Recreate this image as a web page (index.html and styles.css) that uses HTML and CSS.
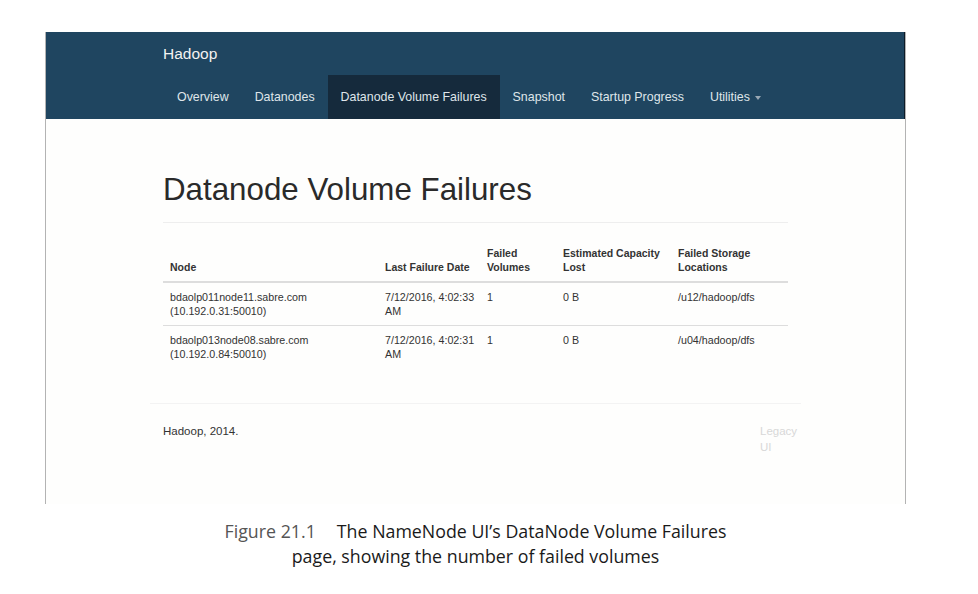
FILE: index.html
```html
<!DOCTYPE html>
<html>
<head>
<meta charset="utf-8">
<link rel="stylesheet" href="styles.css">
</head>
<body>
<div class="figure">
  <div class="frame">
    <div class="navbar">
      <div class="nav-inner">
        <div class="brand">Hadoop</div>
        <ul class="nav">
          <li>Overview</li>
          <li>Datanodes</li>
          <li class="active">Datanode Volume Failures</li>
          <li>Snapshot</li>
          <li>Startup Progress</li>
          <li>Utilities <span class="caret"></span></li>
        </ul>
      </div>
    </div>
    <div class="content">
      <h1 class="title">Datanode Volume Failures</h1>
      <table class="tbl">
        <colgroup>
          <col class="c1"><col class="c2"><col class="c3"><col class="c4"><col class="c5">
        </colgroup>
        <thead>
          <tr>
            <th>Node</th>
            <th>Last Failure Date</th>
            <th>Failed<br>Volumes</th>
            <th>Estimated Capacity<br>Lost</th>
            <th>Failed Storage<br>Locations</th>
          </tr>
        </thead>
        <tbody>
          <tr>
            <td>bdaolp011node11.sabre.com<br>(10.192.0.31:50010)</td>
            <td>7/12/2016, 4:02:33<br>AM</td>
            <td>1</td>
            <td>0 B</td>
            <td>/u12/hadoop/dfs</td>
          </tr>
          <tr>
            <td>bdaolp013node08.sabre.com<br>(10.192.0.84:50010)</td>
            <td>7/12/2016, 4:02:31<br>AM</td>
            <td>1</td>
            <td>0 B</td>
            <td>/u04/hadoop/dfs</td>
          </tr>
        </tbody>
      </table>
      <div class="footer">
        <div class="copy">Hadoop, 2014.</div>
        <div class="legacy">Legacy<br>UI</div>
      </div>
    </div>
  </div>
  <p class="caption"><span class="fig">Figure 21.1</span><span class="sp"></span>The NameNode UI’s DataNode Volume Failures<br>page, showing the number of failed volumes</p>
</div>
</body>
</html>
```
FILE: styles.css
```css
html, body {
  margin: 0;
  padding: 0;
  background: #ffffff;
}
body {
  font-family: "Liberation Sans", Arial, sans-serif;
}
.figure {
  padding-top: 32px;
  padding-left: 45px;
  width: 861px;
}
.frame {
  border-left: 1px solid #b3b3b3;
  border-right: 1px solid #b3b3b3;
  height: 472px;
  background: #fefefd;
}
.navbar {
  background: #1f4560;
  height: 87px;
  border-right: 1px solid #0c1b28;
}
.nav-inner {
  padding-left: 117px;
}
.brand {
  color: #f2f2f2;
  font-size: 15.5px;
  height: 43px;
  line-height: 43px;
}
.nav {
  list-style: none;
  margin: 0;
  padding: 0;
  display: flex;
  margin-left: 1px;
}
.nav li {
  color: #dfe5ea;
  font-size: 12.4px;
  padding: 0 13px;
  height: 44px;
  line-height: 44px;
}
.nav li.active {
  background: #152a3c;
}
.caret {
  display: inline-block;
  width: 0;
  height: 0;
  border-left: 3.5px solid transparent;
  border-right: 3.5px solid transparent;
  border-top: 4px solid #9aa8b4;
  vertical-align: middle;
  margin-left: 2px;
}
.content {
  padding-left: 117px;
  width: 625px;
}
.title {
  margin: 0;
  padding-top: 54px;
  font-weight: normal;
  font-size: 31.3px;
  line-height: 34px;
  color: #2a2a2a;
  padding-bottom: 15px;
  border-bottom: 1px solid #eeeeee;
}
.tbl {
  width: 625px;
  border-collapse: collapse;
  margin-top: 17px;
  table-layout: fixed;
  font-size: 10.7px;
  color: #333;
}
.c1 { width: 215px; }
.c2 { width: 102px; }
.c3 { width: 76px; }
.c4 { width: 115px; }
.c5 { width: 117px; }
.tbl th {
  text-align: left;
  vertical-align: bottom;
  font-weight: bold;
  font-size: 10.5px;
  padding: 6px 7px 7px;
  line-height: 14px;
  border-bottom: 2px solid #dddddd;
}
.tbl td {
  vertical-align: top;
  padding: 7px 7px 7px;
  line-height: 14px;
  border-top: 1px solid #dddddd;
  white-space: nowrap;
}
.tbl tbody tr:first-child td {
  border-top: none;
}
.footer {
  margin-top: 35px;
  margin-left: -13px;
  width: 651px;
  border-top: 1px solid #f3f3f3;
  display: flex;
  justify-content: space-between;
  padding-top: 19px;
  font-size: 11.5px;
  line-height: 16px;
}
.copy {
  color: #333;
  padding-left: 13px;
}
.legacy {
  color: #d8d8d8;
  width: 41px;
}
.caption {
  margin: 15px 0 0;
  text-align: center;
  font-family: "Open Sans", "Noto Sans", sans-serif;
  font-size: 17.8px;
  line-height: 25px;
  color: #1a1a1a;
}
.fig {
  color: #555;
}
.sp {
  display: inline-block;
  width: 21px;
}
```
